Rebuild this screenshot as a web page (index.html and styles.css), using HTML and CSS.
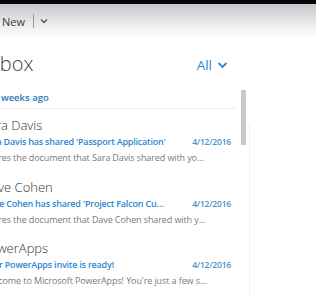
FILE: index.html
```html
<!DOCTYPE html>
<html lang="en">
<head>
    <meta charset="UTF-8">
    <meta name="viewport" content="width=device-width, initial-scale=1.0">
    <title>Inbox</title>
    <link rel="stylesheet" href="styles.css">
</head>
<body>
<div class="topbar"></div>

<div class="toolbar">
    <span class="toolbar-new">New</span>
    <span class="toolbar-divider"></span>
    <svg class="toolbar-chevron" width="8" height="6" viewBox="0 0 8 6">
        <path d="M1 1.5 L4 4.5 L7 1.5" fill="none" stroke="#555" stroke-width="1.4"/>
    </svg>
</div>

<div class="main">
    <div class="list-pane">
        <div class="list-header">
            <h1 class="title">Inbox</h1>
            <div class="filter">
                <span>All</span>
                <svg width="11" height="8" viewBox="0 0 11 8">
                    <path d="M1.5 2 L5.5 6 L9.5 2" fill="none" stroke="#2f86d0" stroke-width="1.8"/>
                </svg>
            </div>
        </div>

        <div class="list-body">
            <div class="list">
                <div class="group">2 weeks ago</div>

                <div class="item">
                    <div class="sender">Sara Davis</div>
                    <div class="subject-row">
                        <span class="subject">Sara Davis has shared 'Passport Application'</span>
                        <span class="date">4/12/2016</span>
                    </div>
                    <div class="preview">Shares the document that Sara Davis shared with you...</div>
                </div>

                <div class="item">
                    <div class="sender">Dave Cohen</div>
                    <div class="subject-row">
                        <span class="subject">Dave Cohen has shared 'Project Falcon Customers'</span>
                        <span class="date">4/12/2016</span>
                    </div>
                    <div class="preview">Shares the document that Dave Cohen shared with you...</div>
                </div>

                <div class="item">
                    <div class="sender">PowerApps</div>
                    <div class="subject-row">
                        <span class="subject">Your PowerApps invite is ready!</span>
                        <span class="date">4/12/2016</span>
                    </div>
                    <div class="preview">Welcome to Microsoft PowerApps! You're just a few steps away...</div>
                </div>
            </div>

            <div class="scroll-track">
                <div class="scroll-thumb"></div>
            </div>
        </div>
    </div>

    <div class="reading-pane"></div>
</div>
</body>
</html>
```

FILE: styles.css
```css
:root {
    --blue: #2f86d0;
    --text: #333333;
    --muted: #7a7a7a;
    --line: #ececec;
}

body {
    margin: 0;
    width: 316px;
    height: 296px;
    overflow: hidden;
    background: #ffffff;
    font-family: "Open Sans", "Noto Sans", sans-serif;
    color: var(--text);
}

.topbar {
    height: 4px;
    background: #050505;
}

.toolbar {
    height: 34px;
    display: flex;
    align-items: center;
    background: linear-gradient(#c6c6cb, #e9e9ec 55%, #ffffff);
    padding-left: 2px;
}

.toolbar-new {
    font-size: 11px;
    color: #3a3a3a;
}

.toolbar-divider {
    width: 1px;
    height: 14px;
    background: #9a9a9a;
    margin-left: 8px;
}

.toolbar-chevron {
    margin-left: 6px;
}

.main {
    display: flex;
}

.list-pane {
    width: 266px;
    flex: none;
    margin-left: -17px;
}

.list-header {
    height: 50px;
    display: flex;
    align-items: center;
    justify-content: space-between;
    padding-right: 21px;
}

.title {
    margin: 0;
    font-size: 20px;
    font-weight: 300;
    color: #3c3c3c;
}

.filter {
    display: flex;
    align-items: center;
    gap: 5px;
    margin-top: 4px;
    font-size: 13.5px;
    color: var(--blue);
}

.list-body {
    display: flex;
}

.list {
    width: 253px;
}

.group {
    height: 20px;
    line-height: 20px;
    padding-left: 10px;
    font-size: 9.5px;
    font-weight: 600;
    color: #2a78b8;
    border-bottom: 1px solid var(--line);
}

.item {
    height: 61.5px;
    padding-top: 8px;
    box-sizing: border-box;
}

.sender {
    font-size: 13px;
    font-weight: 300;
    line-height: 17px;
    color: #333;
    white-space: nowrap;
    margin-left: -1px;
}

.subject-row {
    display: flex;
    align-items: baseline;
    padding-right: 5px;
    line-height: 16px;
}

.subject {
    flex: 1;
    min-width: 0;
    margin-right: 26px;
    white-space: nowrap;
    overflow: hidden;
    text-overflow: ellipsis;
    font-size: 9px;
    letter-spacing: -0.2px;
    font-weight: 600;
    color: var(--blue);
}

.date {
    font-size: 8.5px;
    letter-spacing: -0.2px;
    font-weight: 600;
    color: #4b90c9;
}

.preview {
    padding-right: 27px;
    white-space: nowrap;
    overflow: hidden;
    text-overflow: ellipsis;
    font-size: 9px;
    letter-spacing: -0.1px;
    line-height: 16px;
    color: var(--muted);
}

.scroll-track {
    width: 5px;
    margin-left: 5px;
}

.scroll-thumb {
    height: 55px;
    margin-top: 2px;
    background: #c8c8c8;
}

.reading-pane {
    flex: 1;
    margin-top: 85px;
    border-left: 1px solid #efefef;
    height: 200px;
}
```
